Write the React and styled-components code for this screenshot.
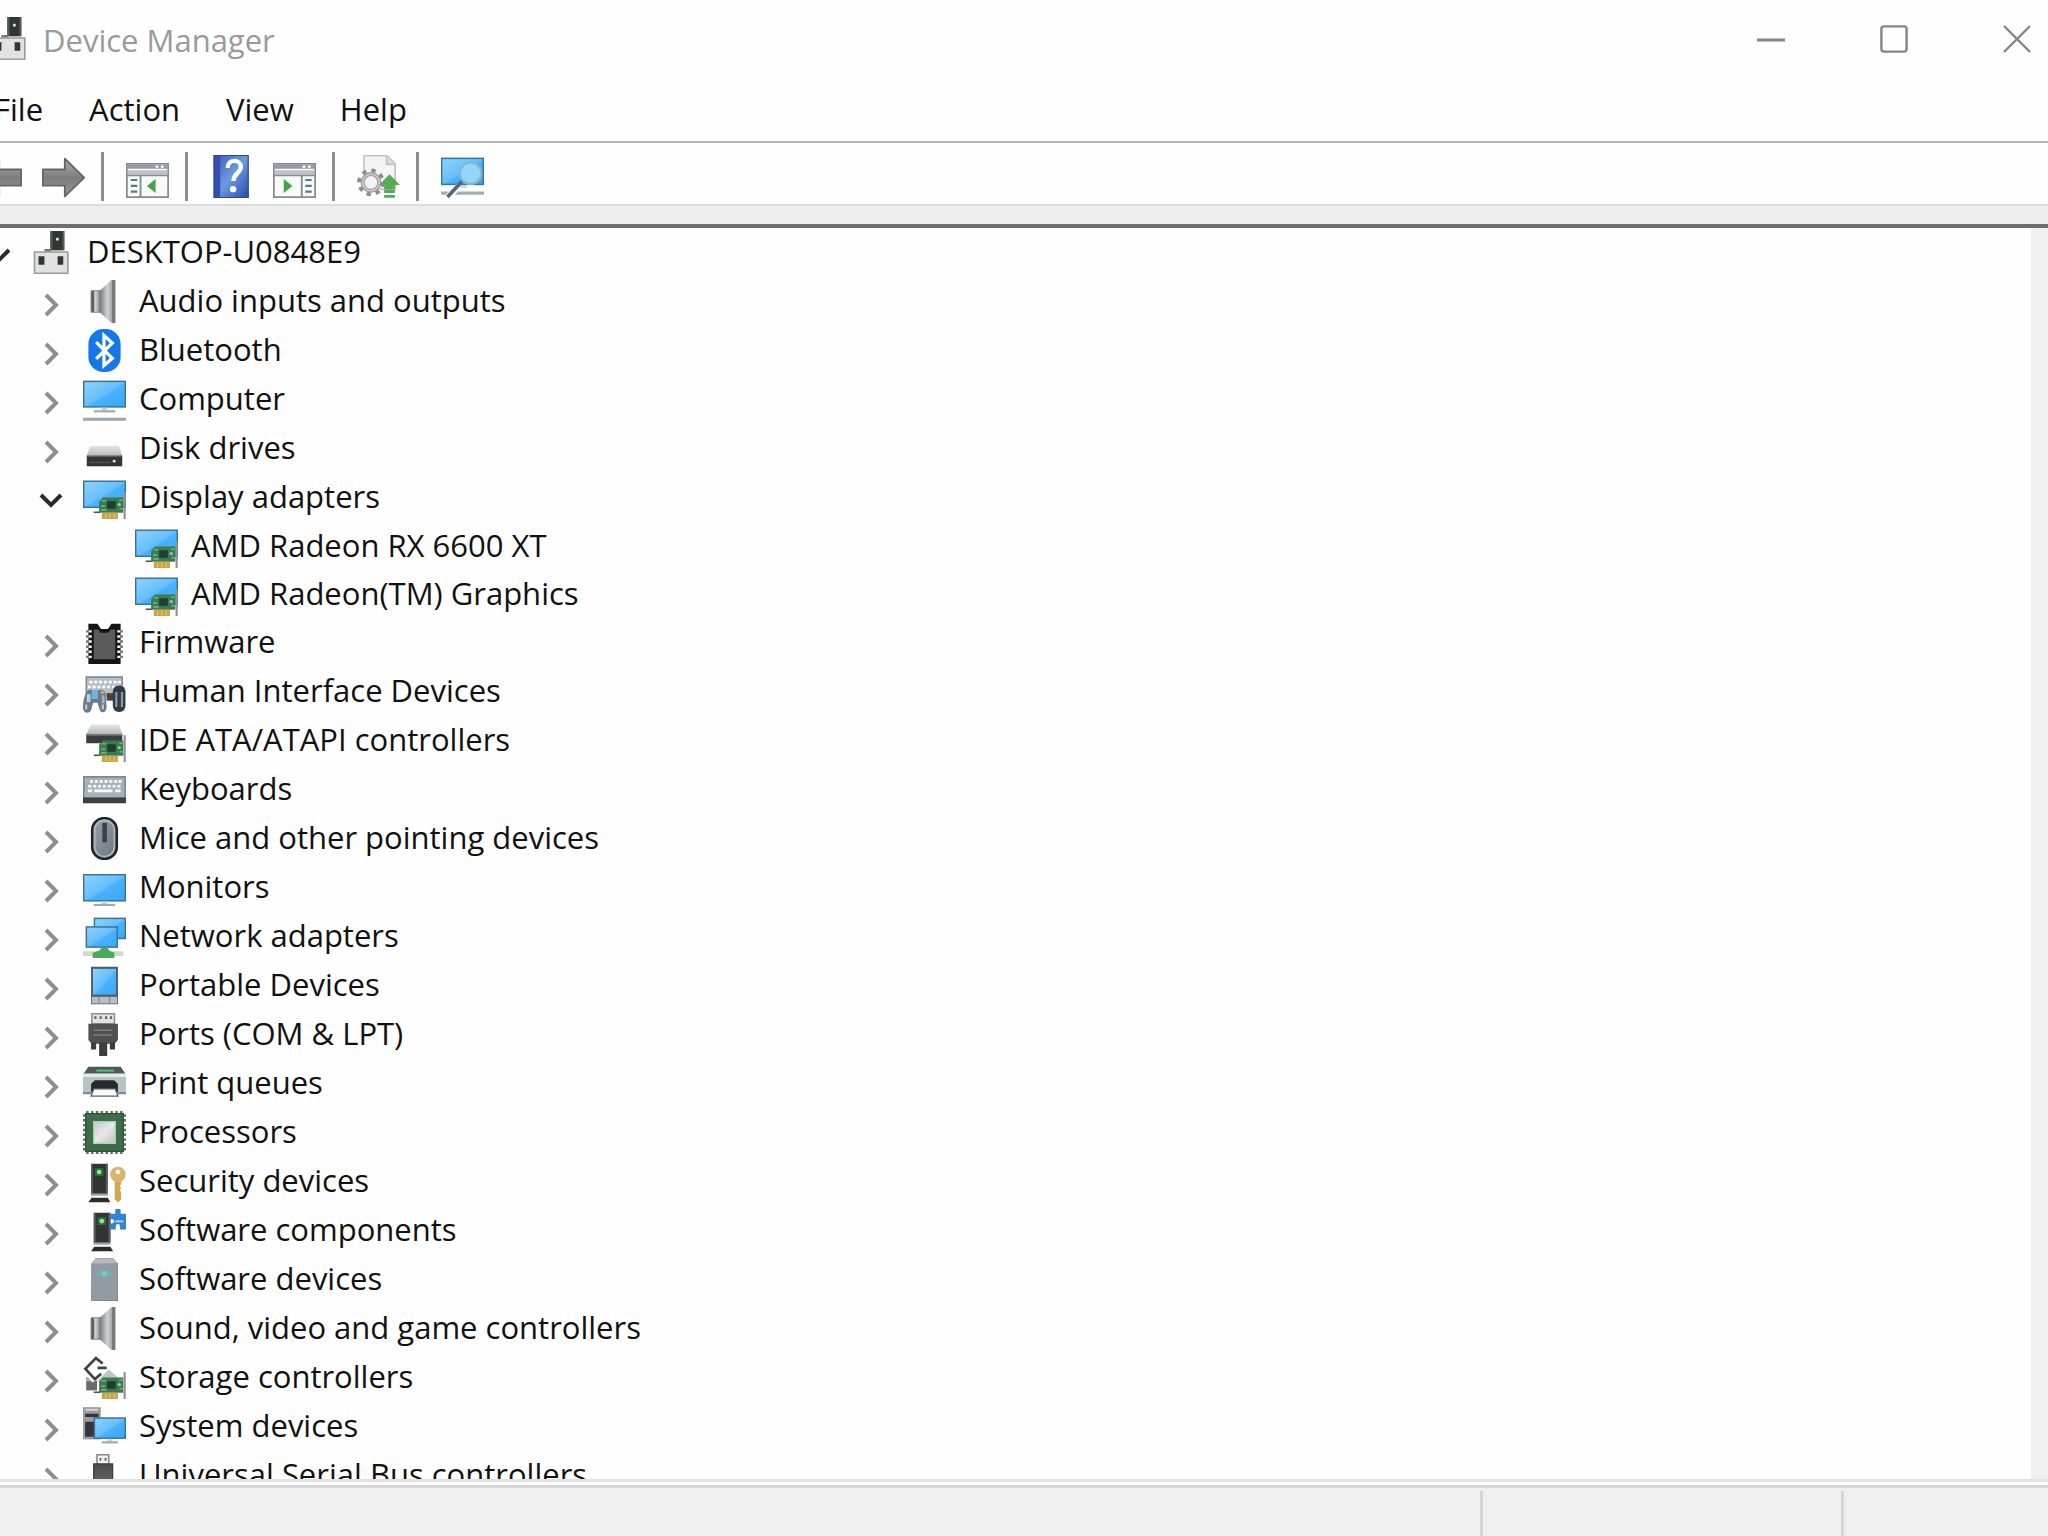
import { useState } from "react";
import styled, { createGlobalStyle } from "styled-components";

const GlobalStyle = createGlobalStyle`
	* {
		box-sizing: border-box;
	}
	body {
		margin: 0;
		overflow: hidden;
		background-color: #ffffff;
	}
	button {
		margin: 0;
		padding: 0;
		border: none;
		background: none;
		font: inherit;
		color: inherit;
	}
`;

// the window is wider than the screen, both sides run off the edge
const Window = styled.div`
	display: flex;
	flex-direction: column;
	height: 100vh;
	margin: 0 -30px 0 -32px;
	background-color: #fefefe;
	color: #111111;
	font-family: "Open Sans", "Noto Sans", sans-serif;
	font-size: 31px;
	line-height: 40px;
	white-space: nowrap;
`;

const TitleBar = styled.header`
	display: flex;
	align-items: center;
	flex: none;
	height: 77px;
	padding-left: 20px;
	color: #9a9a9a;
`;

const Title = styled.h1`
	flex: 1;
	margin: 0;
	padding: 2px 0 0 12px;
	font-size: inherit;
	font-weight: 400;
`;

const WindowButton = styled.button`
	display: flex;
	align-items: center;
	justify-content: center;
	width: 123px;
	height: 76px;
	color: #858585;
	&:hover {
		background-color: #e9e9e9;
	}
`;

const MenuBar = styled.nav`
	display: flex;
	align-items: center;
	flex: none;
	height: 64px;
	padding-left: 3px;
`;

const MenuButton = styled.button`
	padding: 0 23px;
	&:hover {
		background-color: #e5f3ff;
	}
`;

const Toolbar = styled.div`
	display: flex;
	align-items: center;
	flex: none;
	height: 65px;
	padding: 6px 0 0 1px;
	border-top: 2px solid #b3b3b3;
	border-bottom: 2px solid #dcdcdc;
`;

const ToolButton = styled.button`
	display: flex;
	padding: 8px 10px;
	&:hover {
		background-color: #e5f3ff;
	}
`;

const Separator = styled.span`
	width: 3px;
	height: 49px;
	margin: 0 12px 0 6px;
	background-color: #8e8e8e;
`;

const Band = styled.div`
	flex: none;
	height: 22px;
	background-color: #eeeeee;
	border-bottom: 4px solid #6e6e6e;
`;

const Main = styled.main`
	display: flex;
	flex: 1;
	min-height: 0;
	overflow: hidden;
`;

const Tree = styled.ul`
	flex: 1;
	margin: 0;
	padding: 0 0 0 5px;
	list-style: none;
`;

const Branch = styled.ul`
	margin: 0;
	padding: 0 0 0 52px;
	list-style: none;
`;

const Row = styled.div`
	display: flex;
	align-items: center;
	height: ${(props) => (props.$leaf ? "48px" : "49px")};
`;

const Expander = styled.button`
	display: flex;
	justify-content: center;
	width: 52px;
	margin-right: 6px;
	padding-top: 6px;
	color: ${(props) => (props.$open ? "#2b2b2b" : "#8f8f8f")};
`;

const LeafSpace = styled.span`
	width: 58px;
`;

const Label = styled.span`
	padding: 0 0 3px 13px;
`;

const ScrollTrack = styled.div`
	width: 47px;
	background-color: #efefef;
`;

const StatusBar = styled.footer`
	display: flex;
	flex: none;
	height: 57px;
	border-top: 3px solid #e2e2e2;
	padding-top: 3px;
	background-color: #fdfdfd;
`;

const StatusPane = styled.div`
	flex: ${(props) => (props.$width ? "none" : 1)};
	width: ${(props) => props.$width};
	display: flex;
	padding-top: 3px;
	border-top: 3px solid #d6d6d6;
	background-color: #efefef;
	&:not(:first-child)::before {
		content: "";
		width: 3px;
		background-color: #d6d6d6;
	}
`;

const Svg = styled.svg`
	display: block;
	flex: none;
	width: 43px;
	height: 43px;
`;

const Glyph = styled.svg`
	display: block;
	width: ${(props) => props.$size};
	height: ${(props) => props.$size};
	fill: none;
	stroke: currentColor;
`;

const HiddenSvg = styled.svg`
	position: absolute;
	width: 0;
	height: 0;
`;

// gradients shared by all icons
const Defs = () => (
	<HiddenSvg aria-hidden="true">
		<defs>
			<linearGradient id="screen" x1="0" y1="0" x2="1" y2="1">
				<stop offset="0" stopColor="#8fd2fb" />
				<stop offset="0.5" stopColor="#66bffb" />
				<stop offset="0.55" stopColor="#4ab2fb" />
				<stop offset="1" stopColor="#37a6fa" />
			</linearGradient>
			<linearGradient id="metal" x1="0" y1="0" x2="1" y2="0">
				<stop offset="0" stopColor="#75797c" />
				<stop offset="0.5" stopColor="#cfd2d4" />
				<stop offset="1" stopColor="#85888b" />
			</linearGradient>
			<linearGradient id="drive" x1="0" y1="0" x2="0" y2="1">
				<stop offset="0" stopColor="#e6e6e6" />
				<stop offset="1" stopColor="#b5b7b8" />
			</linearGradient>
			<linearGradient id="dark" x1="0" y1="0" x2="0" y2="1">
				<stop offset="0" stopColor="#4c4c4c" />
				<stop offset="1" stopColor="#707070" />
			</linearGradient>
			<linearGradient id="slate" x1="0" y1="0" x2="1" y2="1">
				<stop offset="0" stopColor="#9ba2aa" />
				<stop offset="1" stopColor="#6c747d" />
			</linearGradient>
			<linearGradient id="arrow" x1="0" y1="0" x2="0" y2="1">
				<stop offset="0" stopColor="#b0b0b0" />
				<stop offset="0.5" stopColor="#7c7c7c" />
				<stop offset="1" stopColor="#9a9a9a" />
			</linearGradient>
			<linearGradient id="help" x1="0" y1="0" x2="1" y2="1">
				<stop offset="0" stopColor="#3b59bd" />
				<stop offset="0.5" stopColor="#6c9ae0" />
				<stop offset="1" stopColor="#2748ad" />
			</linearGradient>
			<linearGradient id="chip" x1="0" y1="0" x2="1" y2="1">
				<stop offset="0" stopColor="#c6c6c8" />
				<stop offset="0.5" stopColor="#e9e7e9" />
				<stop offset="1" stopColor="#bfc3c1" />
			</linearGradient>
		</defs>
	</HiddenSvg>
);

const Icon = ({ children }) => (
	<Svg viewBox="0 0 16 16" aria-hidden="true">
		{children}
	</Svg>
);

const Screen = ({ x, y, w, h }) => (
	<rect x={x + 0.25} y={y + 0.25} width={w - 0.5} height={h - 0.5} fill="url(#screen)" stroke="#3b7397" strokeWidth="0.55" />
);

const Card = () => (
	<g>
		<path d="M4 13.2h2.4v.6H4z" fill="#4b5350" />
		<path d="M6 9.6 7.4 8H15v5.7H6z" fill="#3c7a50" />
		<path d="M7 9.2h1.6M6.8 11.2h1.4M6.8 12.6h2M13.4 9h1.4M13.6 12.2h1.2" stroke="#73b07c" strokeWidth="0.6" />
		<path d="M9 9.4h3.2v2.8H9z" fill="#1e3f2d" />
		<circle cx="13.5" cy="10.6" r="0.6" fill="#9ccf9c" />
		<path d="M7 13.7h6V16H7z" fill="#cda349" />
		<path d="M8.4 14v1.6M10 14v1.6M11.6 14v1.6" stroke="#e5c679" strokeWidth="0.4" />
		<path d="M15.1 6h.8v10h-.8z" fill="#8d9294" />
	</g>
);

const Drive = () => (
	<g>
		<path d="M2.6 7h10.8l1.2 3.8H1.4z" fill="url(#drive)" />
		<path d="M1.4 10.7h13.2v3.9H1.4z" fill="#343434" />
		<path d="M1.4 10.7h13.2v.5H1.4z" fill="#5d5f5f" />
		<path d="M2.4 13.2h8" stroke="#555555" strokeWidth="0.5" />
		<circle cx="11.6" cy="12.7" r="0.55" fill="#d9efe0" />
	</g>
);

const Tower = () => (
	<g>
		<path d="M3 1.4h6.2v11.2H3z" fill="#323334" />
		<path d="M3 1.4h.7v11.2H3zM8.5 1.4h.7v11.2h-.7z" fill="#5b5e5f" />
		<path d="M4.4 3h3.2v3H4.4z" fill="#2b6a37" />
		<circle cx="6" cy="4.5" r="0.9" fill="#8be89a" />
		<path d="M3 12.5h6.2v.8H3z" fill="#9da0a2" />
		<path d="M3.2 14h6l1 1.7H2z" fill="#2b2b2b" />
	</g>
);

const keyRows = [
	[2.6, 4.4, 6.2, 8, 9.8, 11.6, 13.2],
	[2, 3.8, 5.6, 7.4, 9.2, 11, 12.8],
];

const Keys = ({ x = 0, y }) => (
	<g fill="#ffffff">
		{keyRows.map((row, i) =>
			row.map((key) => (
				<rect key={`${i}-${key}`} x={key + x} y={y + i * 1.8} width="1.1" height="1" />
			))
		)}
	</g>
);

const PcIcon = () => (
	<Icon>
		<path d="M7.2 0h5.2v7.2H7.2z" fill="#303733" />
		<path d="M7.2 0h.8v7h-.8zM11.7 0h.7v7h-.7z" fill="#555b58" />
		<circle cx="9.8" cy="3" r="0.6" fill="#dbe5df" />
		<path d="M5 6.7h2.6v1H5z" fill="#77797a" />
		<path d="M1.3 7.8h12.4v7.9H1.3z" fill="#e2e2e3" stroke="#9a9b9c" strokeWidth="0.6" />
		<path d="M2.8 9.4h2.2v3.2H2.8zM9.9 9.4H12v3.2H9.9z" fill="#333535" />
	</Icon>
);

const icons = {
	pc: PcIcon,
	speaker: () => (
		<Icon>
			<path d="M3 4h3.4v8H3z" fill="url(#metal)" stroke="#6d7174" strokeWidth="0.3" />
			<path d="M3.2 4.2h.9v7.6h-.9z" fill="#596066" />
			<path d="M6.2 4 10.6 0H12v16h-1.4L6.2 12z" fill="url(#metal)" />
			<path d="M10.8 0H12v16h-1.2z" fill="#777a7d" />
		</Icon>
	),
	bluetooth: () => (
		<Icon>
			<rect x="2" y="0" width="12" height="16" rx="5.6" fill="#1478ea" />
			<path d="m4.9 4.9 6 6L7.8 13.6V2.4l3.1 2.8-6 5.9" fill="none" stroke="#ffffff" strokeWidth="1.2" />
		</Icon>
	),
	computer: () => (
		<Icon>
			<Screen x={0} y={1} w={16} h={10} />
			<path d="M7 11h2v1H7z" fill="#b9d3de" />
			<path d="M4 12h8v.8H4z" fill="#9caab2" />
			<path d="M0 14.8h16v1.1H0z" fill="#9aa5ad" />
		</Icon>
	),
	disk: () => (
		<Icon>
			<Drive />
		</Icon>
	),
	display: () => (
		<Icon>
			<Screen x={0} y={1.7} w={16} h={10.2} />
			<Card />
		</Icon>
	),
	firmware: () => (
		<Icon>
			<path d="M2 1h3.4l1.3 2h2.6l1.3-2H14v15H2z" fill="#151515" />
			<path d="M4 3.2h1.6l1 1.2h2.8l1-1.2H12v11H4z" fill="#5b5b5b" />
			<path d="M2.7 3.4v11M13.3 3.4v11" stroke="#f4f4f4" strokeWidth="1.1" strokeDasharray="0.9 1" />
			<path d="M1.5 3.4v11M14.5 3.4v11" stroke="#555555" strokeWidth="0.6" strokeDasharray="0.9 1" />
		</Icon>
	),
	hid: () => (
		<Icon>
			<path d="M1.2 2.6h13.4v7H1.2z" fill="#b4bec8" stroke="#7a858f" strokeWidth="0.5" />
			<Keys y={4} x={-0.2} />
			<path d="M1.2 8.4c.8-1.4 2-1.2 2.8-.6h1.4c1.4-.8 2.6-.4 3 1l.4 5c-.2 2.4-2.2 2.6-2.7.6l-.7-2.2H3.8L3 15c-.6 1.4-2.8 1.2-3-.8 0-2.2.3-4.2 1.2-5.8z" fill="#6a7a88" />
			<path d="M3.2 7.4h2.4v3.4H3.2z" fill="#6fb2e4" />
			<path d="M1.4 9h1.4v3H1.4z" fill="#b9cedd" />
			<path d="M7 9.4h1v3H7z" fill="#9fb6c7" />
			<path d="M1.2 12.8v1.8M7.4 12.8v1.8" stroke="#c0cad2" strokeWidth="0.8" />
			<circle cx="7.2" cy="8.3" r="0.7" fill="#d9a55b" />
			<path d="M8.8 8.6h2.6v2.8H8.8z" fill="#4b423c" />
			<rect x="11.1" y="5.8" width="4.7" height="9.8" rx="2.2" fill="#333a44" />
			<path d="M12.4 8.2v5.6M14.5 8.2v5.6" stroke="#8f99a8" strokeWidth="0.8" />
		</Icon>
	),
	ide: () => (
		<Icon>
			<path d="M3 2h10.4l1.2 3.6H1.2z" fill="url(#drive)" />
			<path d="M1.2 5.6h13.4V9H1.2z" fill="#3b3e3e" />
			<path d="M1.2 5.6h13.4v.6H1.2z" fill="#747777" />
			<Card />
		</Icon>
	),
	keyboard: () => (
		<Icon>
			<path d="M.3 3.3h15.4v8H.3z" fill="#a9b1b8" stroke="#80888f" strokeWidth="0.6" />
			<Keys y={4.5} />
			<path d="M1.8 8.5h1.6M4.2 8.5h6.8M12 8.5h2" stroke="#ffffff" strokeWidth="1" />
			<path d="M0 11h16v2.1H0z" fill="#3b4044" />
		</Icon>
	),
	mouse: () => (
		<Icon>
			<rect x="3.4" y="0.4" width="9.2" height="15.2" rx="4.4" fill="url(#slate)" stroke="#1f2327" strokeWidth="0.9" />
			<rect x="4.4" y="1.3" width="7.2" height="13.4" rx="3.5" fill="none" stroke="#b5bcc2" strokeWidth="0.5" />
			<path d="M7.2 2.2h1.7v7.2H7.2z" fill="#3a4149" />
		</Icon>
	),
	monitor: () => (
		<Icon>
			<Screen x={0} y={3} w={16} h={10.2} />
			<path d="M7 13.2h2v1H7z" fill="#c1dae4" />
			<path d="M4 14.1h8v.8H4z" fill="#a0aab0" />
		</Icon>
	),
	network: () => (
		<Icon>
			<Screen x={4} y={1} w={12} h={8} />
			<Screen x={1} y={4.2} w={12} h={8} />
			<path d="M0 13.5h15v1.8H0z" fill="#d1d7d1" />
			<path d="M6.8 12.2h2.4l.5 1 2 .8v2H3.6v-2l2.6-.8z" fill="#4ba95a" />
		</Icon>
	),
	portable: () => (
		<Icon>
			<path d="M3 1h10v14H3z" fill="#525960" />
			<path d="M3.7 1.8h8.6v9.6H3.7z" fill="url(#screen)" />
			<path d="M3.3 12.2h9.4v2.5H3.3z" fill="#b8bdc1" />
			<path d="M5.9 12.2v2.5M9.9 12.2v2.5" stroke="#8d9296" strokeWidth="0.5" />
		</Icon>
	),
	ports: () => (
		<Icon>
			<path d="M3.3.3h8.4V4H3.3z" fill="#e2e2e2" stroke="#909090" strokeWidth="0.6" />
			<path d="M4.6 1.2v1M6.6 1.2v1M8.6 1.2v1M10.4 1.2v1" stroke="#666666" strokeWidth="0.8" />
			<path d="M2 4h11v6l-1.2 1.4H3.2L2 10z" fill="#505050" />
			<path d="M4 6.4h7M4 8.2h7" stroke="#7e7e7e" strokeWidth="0.6" />
			<path d="M3 11h1.9v2.6H3zM10 11h1.9v2.6H10zM6 11h3v5H6z" fill="#3d3d3d" />
		</Icon>
	),
	printer: () => (
		<Icon>
			<path d="M2 1.8h12l1.8 2.6H.2z" fill="#4d5b58" />
			<path d="M5 3.2h6.6" stroke="#58b57b" strokeWidth="0.8" />
			<path d="M0 4.4h16v7.4H0z" fill="#bac2c8" />
			<path d="M0 4.4h16v1.2H0z" fill="#e3e8eb" />
			<path d="M0 11.2h3v.8H0zM13 11.2h3v.8h-3z" fill="#808a91" />
			<path d="M3 8.2 4.4 6.8h7.2L13 8.2v3H3z" fill="#262a2d" />
			<path d="M4 10h8l1 2.7H3z" fill="#f6f8f9" stroke="#596167" strokeWidth="0.5" />
		</Icon>
	),
	processor: () => (
		<Icon>
			<path d="M1.2.5h13.8M1.2 15.5h13.8M.5 1.2v13.8M15.5 1.2v13.8" stroke="#58745f" strokeWidth="1" strokeDasharray="0.9 0.9" />
			<path d="M1 1h14v14H1z" fill="#3e6b49" />
			<path d="M1 1h14v14H1z" fill="none" stroke="#31553b" strokeWidth="0.5" />
			<path d="M4 4h8v8H4z" fill="url(#chip)" stroke="#a9d5b0" strokeWidth="0.5" />
		</Icon>
	),
	security: () => (
		<Icon>
			<Tower />
			<path d="M11.8 7.5h2.4V9l-.5.7.5.8-.5.8.5.8v2.5L13 15.8l-1.2-1.2z" fill="#d1a64e" />
			<circle cx="13" cy="5.4" r="2.9" fill="#d9b469" />
			<circle cx="13" cy="4.4" r="0.9" fill="#ffffff" />
		</Icon>
	),
	component: () => (
		<Icon>
			<g transform="translate(1 0)">
				<Tower />
			</g>
			<path d="M10 1.8h2V.6a1 1 0 0 1 2 0v1.2h2v5.8h-2.2V6.4a.8.8 0 0 0-1.6 0v1.2H10V5.4h.8a.8.8 0 0 0 0-1.6H10z" fill="#3583cf" />
			<path d="M12 4.6h3" stroke="#9bd0f5" strokeWidth="0.8" />
		</Icon>
	),
	software: () => (
		<Icon>
			<path d="M3 2 4.8 0h6.4L13 2v14H3z" fill="url(#slate)" />
			<path d="M3.2 2 4.8.2h6.4L12.8 2z" fill="#b6babf" />
			<path d="M3.3 2.2h9.4v13.5H3.3z" fill="#929ba3" />
			<path d="M5.2 5.8h5.6" stroke="#5cc0bb" strokeWidth="0.9" strokeDasharray="1.2 0.3" />
			<path d="M7 4.8h2v2H7z" fill="#64cfc7" />
		</Icon>
	),
	storage: () => (
		<Icon>
			<path d="M1.2 8h4v4.8h-4z" fill="#6a6c6c" />
			<path d="M1.2 8h4v1.4h-4z" fill="#b1b3b3" />
			<path d="M4.4 9.2.9 4.8 4.8 1.1 7 3" fill="none" stroke="#ffffff" strokeWidth="2.2" />
			<path d="M5 9.6 9.6 5l3.8 3.4z" fill="#b9c8bf" />
			<Card />
			<path d="M7.3 2.8 4.8.8.9 4.8l3.5 3.8 2.4-2M5.4 4.4h3.4" fill="none" stroke="#3f4241" strokeWidth="1" />
		</Icon>
	),
	system: () => (
		<Icon>
			<path d="M0 .8h6.6v12H0z" fill="#9a9da0" />
			<path d="M.8 3.3h5v1.2h-5zM.8 6.2h3.4v5.6H.8z" fill="#333536" />
			<path d="M1 1.8h4.6" stroke="#d5d7d8" strokeWidth="0.7" />
			<Screen x={4} y={4.6} w={12} h={8} />
			<path d="M9 12.6h2v1H9z" fill="#c1dae4" />
			<path d="M7 13.5h6v.8H7z" fill="#a0aab0" />
		</Icon>
	),
	usb: () => (
		<Icon>
			<path d="M5.2.3h4.4v3.6H5.2z" fill="#f0f0f0" stroke="#8a8a8a" strokeWidth="0.6" />
			<path d="M6.5 1.5v1M8.4 1.5v1" stroke="#666666" strokeWidth="0.7" />
			<path d="M4 3.7h7v9l-1.4 1.6H5.4L4 12.7z" fill="url(#dark)" stroke="#3d3d3d" strokeWidth="0.5" />
			<path d="M6.5 14h2v2h-2z" fill="#3d3d3d" />
		</Icon>
	),
};

const Arrow = ({ flip }) => (
	<Icon>
		<path
			d="M.3 5h8.2V1L15.7 8l-7.2 7V11H.3z"
			transform={flip ? "matrix(-1 0 0 1 16 .4)" : "translate(0 .4)"}
			fill="url(#arrow)"
			stroke="#666666"
			strokeWidth="0.7"
			strokeLinejoin="round"
		/>
	</Icon>
);

const PaneIcon = ({ right }) => (
	<Icon>
		<path d="M.3 3.3h15.4v12.4H.3z" fill="#f8faf8" stroke="#858b92" strokeWidth="0.7" />
		<path d="M.6 3.6h14.8v1.5H.6z" fill="#949ba4" />
		<path d="M.6 5.7h14.8v1.5H.6z" fill="#bcc1c8" />
		<path d="M.4 7.6h15.2" stroke="#858b92" strokeWidth="0.6" />
		<path d="M11 4.3h1M13 4.3h1" stroke="#ffffff" strokeWidth="0.8" />
		{right ? (
			<g>
				<path d="M10.7 7.6v8" stroke="#858b92" strokeWidth="0.7" />
				<path d="M12 9.3h2.4M12 11.5h2.4M12 13.6h2.4" stroke="#60748c" strokeWidth="0.8" />
				<path d="m4 8.9 3.2 2.6L4 14.1z" fill="#45a447" />
			</g>
		) : (
			<g>
				<path d="M5.4 7.6v8" stroke="#858b92" strokeWidth="0.7" />
				<path d="M1.8 9.3h2.4M1.8 11.5h2.4M1.8 13.6h2.4" stroke="#60748c" strokeWidth="0.8" />
				<path d="M11 8.9v5.2l-3.2-2.6z" fill="#45a447" />
			</g>
		)}
	</Icon>
);

const HelpIcon = () => (
	<Icon>
		<path d="M1.4 0h13v16h-13z" fill="url(#help)" />
		<path d="M1.4 0h2.4v16H1.4z" fill="#3450ac" />
		<path d="M1.5.2h12.7v15.6H1.5z" fill="none" stroke="#2f4790" strokeWidth="0.4" />
		<path d="M6.6 4.8c0-1.6 1-2.6 2.4-2.6s2.5.9 2.5 2.3c0 2.1-2.8 2.3-2.8 5.2" fill="none" stroke="#ffffff" strokeWidth="1.6" />
		<circle cx="8.6" cy="12.7" r="1.2" fill="#ffffff" />
	</Icon>
);

const UpdateIcon = () => (
	<Icon>
		<path d="M2.6.3h8.6l3 3v9.4H2.6z" fill="#f4f4f4" stroke="#c2c2c2" strokeWidth="0.6" />
		<path d="M11 .4v3.1h3.1" fill="#dddddd" stroke="#c2c2c2" strokeWidth="0.6" />
		<circle cx="5.2" cy="10.2" r="4.4" fill="none" stroke="#8d8d8d" strokeWidth="1.5" strokeDasharray="1.6 1.856" />
		<circle cx="5.2" cy="10.2" r="3.1" fill="#f4f4f4" stroke="#9c9c9c" strokeWidth="1.5" />
		<circle cx="5.2" cy="10.2" r="3.1" fill="none" stroke="#cccccc" strokeWidth="0.6" />
		<path d="m12.1 7.2 3.9 4h-1.9v1.6h-4v-1.6H8.2z" fill="#55ab58" />
		<path d="M10.1 13.6h4M10.1 15.4h4" stroke="#55ab58" strokeWidth="1.1" />
	</Icon>
);

const ScanIcon = () => (
	<Icon>
		<Screen x={0} y={1} w={16} h={10.2} />
		<path d="M0 13.6h16v1.2H0z" fill="#a0afb8" />
		<path d="M6.6 11.2h3v1H6.6z" fill="#c1dae4" />
		<path d="m6.6 11.6-4 4" stroke="#ffffff" strokeWidth="2.4" />
		<path d="m8 9.6-5.6 6" stroke="#586671" strokeWidth="1.4" />
		<circle cx="11" cy="6.8" r="4" fill="#95d6f7" stroke="#84b6d3" strokeWidth="0.8" />
	</Icon>
);

const Chevron = ({ open }) => (
	<Glyph $size="26px" viewBox="0 0 26 26" strokeWidth="4" aria-hidden="true">
		{open ? <path d="m3 7 10 10L23 7" /> : <path d="m8 3 10 10L8 23" />}
	</Glyph>
);

const devices = [
	{ name: "Audio inputs and outputs", icon: "speaker" },
	{ name: "Bluetooth", icon: "bluetooth" },
	{ name: "Computer", icon: "computer" },
	{ name: "Disk drives", icon: "disk" },
	{
		name: "Display adapters",
		icon: "display",
		open: true,
		children: [
			{ name: "AMD Radeon RX 6600 XT", icon: "display" },
			{ name: "AMD Radeon(TM) Graphics", icon: "display" },
		],
	},
	{ name: "Firmware", icon: "firmware" },
	{ name: "Human Interface Devices", icon: "hid" },
	{ name: "IDE ATA/ATAPI controllers", icon: "ide" },
	{ name: "Keyboards", icon: "keyboard" },
	{ name: "Mice and other pointing devices", icon: "mouse" },
	{ name: "Monitors", icon: "monitor" },
	{ name: "Network adapters", icon: "network" },
	{ name: "Portable Devices", icon: "portable" },
	{ name: "Ports (COM & LPT)", icon: "ports" },
	{ name: "Print queues", icon: "printer" },
	{ name: "Processors", icon: "processor" },
	{ name: "Security devices", icon: "security" },
	{ name: "Software components", icon: "component" },
	{ name: "Software devices", icon: "software" },
	{ name: "Sound, video and game controllers", icon: "speaker" },
	{ name: "Storage controllers", icon: "storage" },
	{ name: "System devices", icon: "system" },
	{ name: "Universal Serial Bus controllers", icon: "usb" },
];

const root = { name: "DESKTOP-U0848E9", icon: "pc", open: true, children: devices };

const TreeNode = ({ node, leaf }) => {
	const [open, setOpen] = useState(Boolean(node.open));
	const NodeIcon = icons[node.icon];
	return (
		<li>
			<Row $leaf={leaf}>
				{leaf ? (
					<LeafSpace />
				) : (
					<Expander
						type="button"
						$open={open}
						aria-expanded={open}
						aria-label={node.name}
						onClick={() => setOpen(!open)}>
						<Chevron open={open} />
					</Expander>
				)}
				<NodeIcon />
				<Label>{node.name}</Label>
			</Row>
			{open && node.children && (
				<Branch>
					{node.children.map((child) => (
						<TreeNode key={child.name} node={child} leaf={node !== root} />
					))}
				</Branch>
			)}
		</li>
	);
};

const App = () => (
	<Window>
		<GlobalStyle />
		<Defs />
		<TitleBar>
			<PcIcon />
			<Title>Device Manager</Title>
			<WindowButton type="button" aria-label="Minimize">
				<Glyph $size="28px" viewBox="0 0 28 28" strokeWidth="3">
					<path d="M0 15h28" />
				</Glyph>
			</WindowButton>
			<WindowButton type="button" aria-label="Maximize">
				<Glyph $size="28px" viewBox="0 0 28 28" strokeWidth="2.4">
					<rect x="1.4" y="1.4" width="25.2" height="25.2" rx="2.5" />
				</Glyph>
			</WindowButton>
			<WindowButton type="button" aria-label="Close">
				<Glyph $size="28px" viewBox="0 0 28 28" strokeWidth="2.4">
					<path d="m1 1 26 26M27 1 1 27" />
				</Glyph>
			</WindowButton>
		</TitleBar>
		<MenuBar>
			{["File", "Action", "View", "Help"].map((item) => (
				<MenuButton type="button" key={item}>
					{item}
				</MenuButton>
			))}
		</MenuBar>
		<Toolbar>
			<ToolButton type="button" aria-label="Back">
				<Arrow flip />
			</ToolButton>
			<ToolButton type="button" aria-label="Forward">
				<Arrow />
			</ToolButton>
			<Separator />
			<ToolButton type="button" aria-label="Show/Hide Console Tree">
				<PaneIcon />
			</ToolButton>
			<Separator />
			<ToolButton type="button" aria-label="Help">
				<HelpIcon />
			</ToolButton>
			<ToolButton type="button" aria-label="Show/Hide Action Pane">
				<PaneIcon right />
			</ToolButton>
			<Separator />
			<ToolButton type="button" aria-label="Update device driver">
				<UpdateIcon />
			</ToolButton>
			<Separator />
			<ToolButton type="button" aria-label="Scan for hardware changes">
				<ScanIcon />
			</ToolButton>
		</Toolbar>
		<Band />
		<Main>
			<Tree>
				<TreeNode node={root} />
			</Tree>
			<ScrollTrack />
		</Main>
		<StatusBar>
			<StatusPane />
			<StatusPane $width="361px" />
			<StatusPane $width="237px" />
		</StatusBar>
	</Window>
);

export default App;
